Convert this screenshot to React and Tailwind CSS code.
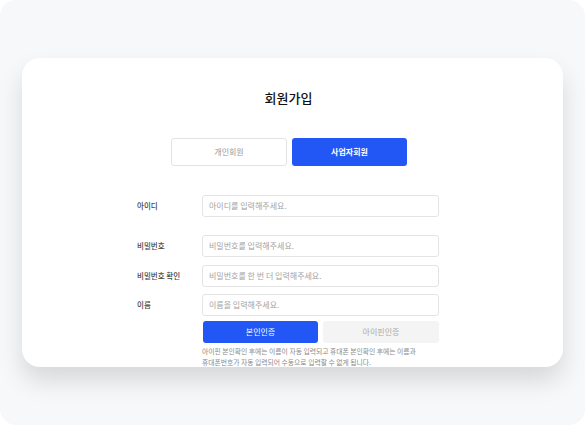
import React from 'react';

const font = { fontFamily: '"Noto Sans CJK KR", "Noto Sans", sans-serif' };

const Field = ({ label, placeholder, className = '' }) => (
  <div className={`flex items-center ${className}`}>
    <span className="w-[65px] text-[7.5px] font-medium text-[#444]">{label}</span>
    <div className="w-[237px] h-[22px] rounded-[3px] border border-[#e4e4e4] bg-white flex items-center px-[6px]">
      <span className="text-[8px] text-[#a3a3a3]">{placeholder}</span>
    </div>
  </div>
);

const App = () => {
  return (
    <div className="w-[585px] h-[425px] bg-white" style={font}>
      <div className="w-full h-full rounded-2xl bg-[#f7f8fa] pt-[58px] px-[22px]">
        <div className="h-[309px] rounded-[18px] bg-white shadow-[0_14px_24px_rgba(0,0,0,0.13)] overflow-hidden pt-[31px]">
          {/* Title */}
          <h1 className="text-center text-[13px] leading-[18px] font-medium text-[#111] pr-[8px]">회원가입</h1>

          {/* Member type tabs */}
          <div className="flex gap-[5px] mt-[31px] pl-[149px]">
            <button className="w-[116px] h-[28px] rounded-[3px] border border-[#e3e3e3] bg-white text-[8px] text-[#999]">
              개인회원
            </button>
            <button className="w-[115px] h-[28px] rounded-[3px] bg-[#2357f5] text-[8px] font-bold text-white">
              사업자회원
            </button>
          </div>

          {/* Form */}
          <div className="pl-[115px] mt-[29px] flex flex-col">
            <Field label="아이디" placeholder="아이디를 입력해주세요." />
            <Field label="비밀번호" placeholder="비밀번호를 입력해주세요." className="mt-[18px]" />
            <Field label="비밀번호 확인" placeholder="비밀번호를 한 번 더 입력해주세요." className="mt-[8px]" />
            <Field label="이름" placeholder="이름을 입력해주세요." className="mt-[7px]" />
            <div className="flex gap-[5px] mt-[5px] pl-[66px]">
              <button className="w-[115px] h-[22px] rounded-[3px] bg-[#2357f5] text-[8px] text-white">본인인증</button>
              <button className="w-[116px] h-[22px] rounded-[3px] bg-[#f4f4f4] text-[8px] text-[#aaa]">아이핀인증</button>
            </div>
            <p className="pl-[65px] mt-[3px] text-[6.8px] leading-[11px] text-[#8a8a8a]">
              아이핀 본인확인 후에는 이름이 자동 입력되고 휴대폰 본인확인 후에는 이름과
              <br />
              휴대폰번호가 자동 입력되어 수동으로 입력할 수 없게 됩니다.
            </p>
          </div>
        </div>
      </div>
    </div>
  );
};

export default App;
